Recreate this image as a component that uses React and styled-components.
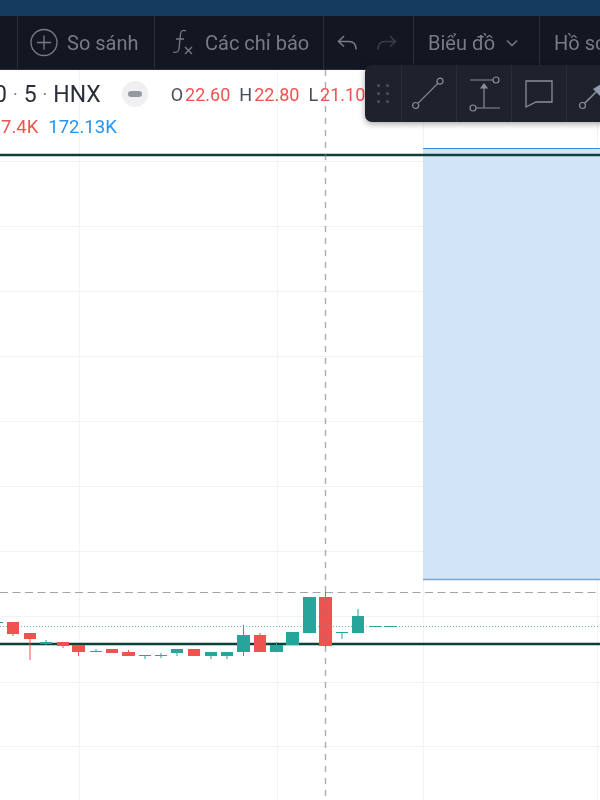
import React from "react";
import styled, { createGlobalStyle } from "styled-components";

const up = "#26a69a";
const down = "#ef5350";

// x, width, bodyTop, bodyBottom, wickTop, wickBottom
const candles = [
  [-9, 12, 622, 623, 621, 624, up],
  [7, 12, 622, 634, 622, 636, down],
  [24, 12, 633, 639, 633, 660, down],
  [40, 12, 642, 644, 640, 645, up],
  [57, 12, 642, 646, 642, 648, down],
  [72, 13, 645, 652, 645, 656, down],
  [90, 12, 651, 652, 649, 652, up],
  [106, 12, 649, 653, 649, 653, down],
  [122, 13, 652, 656, 650, 656, down],
  [139, 12, 655, 656, 655, 659, up],
  [155, 12, 655, 656, 653, 658, up],
  [171, 12, 649, 653, 649, 656, up],
  [188, 12, 649, 656, 649, 656, down],
  [205, 12, 652, 656, 652, 659, up],
  [221, 12, 652, 656, 652, 659, up],
  [237, 13, 635, 652, 625, 656, up],
  [254, 12, 635, 652, 633, 652, down],
  [270, 13, 645, 652, 642, 652, up],
  [286, 13, 632, 645, 632, 645, up],
  [303, 13, 597, 633, 597, 633, up],
  [319, 13, 597, 646, 592, 647, down],
  [336, 12, 632, 633, 632, 639, up],
  [352, 12, 616, 633, 609, 633, up],
  [369, 12, 626, 627, 626, 627, up],
  [384, 13, 626, 627, 626, 627, up],
];

const gridRows = [161, 226, 291, 356, 421, 486, 551, 616, 682, 746];
const gridCols = [79, 277, 423, 597];

const App = () => {
  return (
    <Page>
      <GlobalStyle />
      <TopStrip />
      <Toolbar>
        <LeadCell />
        <ToolCell $width={137} $pad={12} $gap={9}>
          <svg width="28" height="30" viewBox="0 0 28 30" fill="none" stroke="#787b86" strokeWidth="1.3">
            <circle cx="14" cy="14.500" r="13" />
            <path d="M14 7.500v14M7 14.500h14" />
          </svg>
          <ToolLabel>So sánh</ToolLabel>
        </ToolCell>
        <ToolCell $width={169} $pad={17} $gap={9}>
          <svg width="24" height="30" viewBox="0 0 24 30" fill="none" stroke="#787b86" strokeWidth="1.3">
            <path d="M14 3c-3-1.500-5 0-5.500 3L7 21c-.5 3-3 4-6 3M4 11h8" />
            <path d="M13 19l7 7M20 19l-7 7" />
          </svg>
          <ToolLabel>Các chỉ báo</ToolLabel>
        </ToolCell>
        <ToolCell $width={90} $pad={13} $gap={16}>
          <svg width="22" height="18" viewBox="0 0 22 18" fill="none" stroke="#787b86" strokeWidth="1.5">
            <path d="M7 2L1.500 7.500 7 12.500M1.500 7.500H12c4 0 7 2.500 7 8" />
          </svg>
          <svg width="22" height="18" viewBox="0 0 22 18" fill="none" stroke="#3a3e4a" strokeWidth="1.5">
            <path d="M15 2l5.500 5.500L15 12.500M20.500 7.500H10c-4 0-7 2.500-7 8" />
          </svg>
        </ToolCell>
        <ToolCell $width={126} $pad={14} $gap={10}>
          <ToolLabel>Biểu đồ</ToolLabel>
          <svg width="14" height="10" viewBox="0 0 14 10" fill="none" stroke="#787b86" strokeWidth="1.5">
            <path d="M2 2.500l5 5 5-5" />
          </svg>
        </ToolCell>
        <ToolCell $width={61} $pad={14}>
          <ToolLabel>Hồ sơ</ToolLabel>
        </ToolCell>
      </Toolbar>

      <ChartArea>
        <svg width="600" height="730" viewBox="0 70 600 730">
          {gridRows.map((y) => (
            <line key={y} x1="0" x2="600" y1={y + 0.5} y2={y + 0.5} stroke="#f3f3f5" />
          ))}
          {gridCols.map((x) => (
            <line key={x} x1={x + 0.5} x2={x + 0.5} y1="70" y2="800" stroke="#f3f3f5" />
          ))}
          <rect x="423" y="149" width="177" height="431" fill="#d2e5f7" />
          <line x1="423" x2="600" y1="148.500" y2="148.500" stroke="#2f8fe0" />
          <line x1="423" x2="600" y1="579.500" y2="579.500" stroke="#7aa9d6" strokeWidth="1.500" />
          <line x1="0" x2="600" y1="155" y2="155" stroke="#0c3f38" strokeWidth="2.500" />
          <line x1="0" x2="600" y1="592.500" y2="592.500" stroke="#a3a3a8" strokeDasharray="8 4.500" />
          <line x1="0" x2="600" y1="626.500" y2="626.500" stroke={up} strokeDasharray="1 2" strokeOpacity="0.7" />
          <line x1="0" x2="600" y1="644" y2="644" stroke="#0c3f38" strokeWidth="2.500" />
          {candles.map(([x, w, top, bottom, wickTop, wickBottom, color]) => (
            <g key={x} fill={color}>
              <rect x={x + w / 2 - 0.5} y={wickTop} width="1" height={wickBottom - wickTop} />
              <rect x={x} y={top} width={w} height={bottom - top} />
            </g>
          ))}
          <line x1="325.500" x2="325.500" y1="70" y2="800" stroke="#787b86" strokeOpacity="0.6" strokeWidth="1.500" strokeDasharray="6 6" />
        </svg>

        <Legend>
          <LegendRow>
            <SymbolText>0</SymbolText>
            <Dot>·</Dot>
            <SymbolText>5</SymbolText>
            <Dot>·</Dot>
            <SymbolText>HNX</SymbolText>
            <StatusPill><StatusDash /></StatusPill>
            <Quote>O<b>22.60</b></Quote>
            <Quote>H<b>22.80</b></Quote>
            <Quote>L<b>21.10</b></Quote>
          </LegendRow>
          <VolumeRow>
            <Volume $color="#ef5350">7.4K</Volume>
            <Volume $color="#2196f3">172.13K</Volume>
          </VolumeRow>
        </Legend>

        <FloatingBar>
          <Grip>
            {[0, 1, 2, 3, 4, 5].map((i) => <GripDot key={i} />)}
          </Grip>
          <FloatCell>
            <svg width="34" height="34" viewBox="0 0 34 34" fill="none" stroke="#8a8e99" strokeWidth="1.2">
              <circle cx="3.700" cy="28.500" r="3" />
              <circle cx="28" cy="4.200" r="3" />
              <path d="M5.900 26.300L25.800 6.400" />
            </svg>
          </FloatCell>
          <FloatCell>
            <svg width="34" height="38" viewBox="0 0 34 38" fill="none" stroke="#8a8e99" strokeWidth="1.2">
              <circle cx="29" cy="5" r="3" />
              <circle cx="6" cy="33" r="3" />
              <path d="M3 5h23M9 33h24M17 9v24" />
              <path d="M14 13l3-4 3 4z" fill="#8a8e99" />
            </svg>
          </FloatCell>
          <FloatCell>
            <svg width="30" height="30" viewBox="0 0 30 30" fill="none" stroke="#8a8e99" strokeWidth="1.3">
              <path d="M2 2h26v21H12L2 28z" />
            </svg>
          </FloatCell>
          <FloatCell>
            <svg width="34" height="34" viewBox="0 0 34 34" fill="none" stroke="#8a8e99" strokeWidth="1.2">
              <circle cx="5.500" cy="28.500" r="3" />
              <path d="M7.700 26.300L19 15" strokeWidth="1.600" />
              <path d="M16 12L32 2l-4 22z" fill="#8f9bb0" stroke="none" />
            </svg>
          </FloatCell>
        </FloatingBar>
      </ChartArea>
    </Page>
  );
};

export default App;

const GlobalStyle = createGlobalStyle`
  html, body {
    margin: 0;
    padding: 0;
    background: #fff;
  }
`;

const Page = styled.div`
  width: 600px;
  height: 800px;
  overflow: hidden;
  display: flex;
  flex-direction: column;
  font-family: Roboto, "Liberation Sans", sans-serif;
  filter: blur(0.4px);
`;

const TopStrip = styled.div`
  height: 16px;
  background: #143a5e;
`;

const Toolbar = styled.div`
  height: 54px;
  background: #131722;
  display: flex;
  border-bottom: 1px solid #2a2e39;
  box-sizing: border-box;
`;

const LeadCell = styled.div`
  width: 17px;
  flex: none;
`;

const ToolCell = styled.div`
  width: ${(p) => p.$width}px;
  flex: none;
  display: flex;
  align-items: center;
  gap: ${(p) => p.$gap ?? 10}px;
  padding-left: ${(p) => p.$pad}px;
  border-left: 1px solid #2a2e39;
  box-sizing: border-box;
  overflow: hidden;
`;

const ToolLabel = styled.span`
  font-size: 20px;
  color: #787b86;
  white-space: nowrap;
`;

const ChartArea = styled.div`
  position: relative;
  flex: 1;
  background: #fff;

  svg {
    display: block;
  }
`;

const Legend = styled.div`
  position: absolute;
  top: 10px;
  left: -6px;
  display: flex;
  flex-direction: column;
  gap: 8px;
`;

const LegendRow = styled.div`
  display: flex;
  align-items: center;
  gap: 6px;
  height: 28px;
  white-space: nowrap;
`;

const SymbolText = styled.span`
  font-size: 23px;
  color: #2a2e39;
`;

const Dot = styled.span`
  font-size: 18px;
  color: #787b86;
`;

const StatusPill = styled.span`
  width: 26px;
  height: 26px;
  border-radius: 50%;
  background: #f0f0f2;
  display: flex;
  align-items: center;
  justify-content: center;
  margin: 0 17px 0 15px;
`;

const StatusDash = styled.span`
  width: 14px;
  height: 6px;
  border-radius: 3px;
  background: #9598a1;
`;

const Quote = styled.span`
  font-size: 18px;
  color: #4a4d57;
  margin-right: 3px;

  b {
    font-weight: 400;
    color: #ef5350;
    margin-left: 2px;
  }
`;

const VolumeRow = styled.div`
  display: flex;
  gap: 10px;
  margin-left: 7px;
`;

const Volume = styled.span`
  font-size: 18.500px;
  color: ${(p) => p.$color};
`;

const FloatingBar = styled.div`
  position: absolute;
  top: -5px;
  left: 365px;
  width: 260px;
  height: 57px;
  display: flex;
  background: #1e222d;
  border-radius: 7px;
  box-shadow: 0 2px 6px rgba(0, 0, 0, 0.35);
`;

const Grip = styled.div`
  width: 36px;
  flex: none;
  display: grid;
  grid-template-columns: repeat(2, 3px);
  grid-auto-rows: 3px;
  gap: 5px 6px;
  align-content: center;
  justify-content: center;
`;

const GripDot = styled.span`
  background: #50535e;
  border-radius: 50%;
`;

const FloatCell = styled.div`
  width: 55px;
  flex: none;
  display: flex;
  align-items: center;
  justify-content: center;
  border-left: 1px solid #2a2e39;
  box-sizing: border-box;
`;
